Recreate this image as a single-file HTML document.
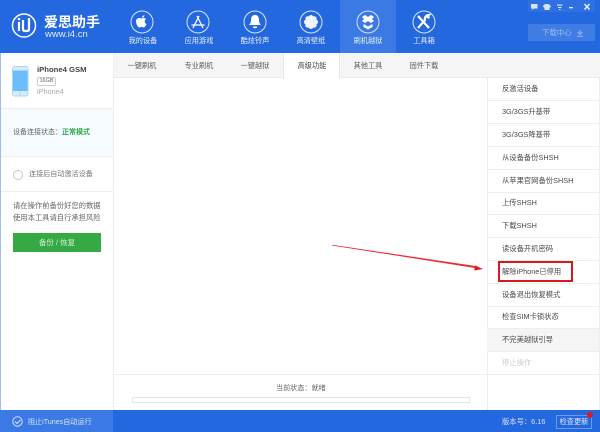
<!DOCTYPE html>
<html lang="zh"><head><meta charset="utf-8"><style>
*{box-sizing:border-box}
html,body{margin:0;padding:0;width:600px;height:432px;overflow:hidden;background:#fff}
body{position:relative;font-family:"Liberation Sans","Noto Sans CJK SC",sans-serif;color:#555;font-size:7px}
#w{position:absolute;left:0;top:0;width:600px;height:432px;filter:blur(.3px)}
.a{position:absolute}
.t{position:absolute;white-space:nowrap;line-height:12px}
.nav{position:absolute;top:35px;width:56px;text-align:center;color:#e6effc;font-size:7.200px;line-height:12px;white-space:nowrap}
.tab{position:absolute;top:60px;width:56px;text-align:center;color:#5a5a5a;font-size:7.200px;line-height:12px;white-space:nowrap}
.r{position:absolute;left:487px;width:112px;height:23px;border-bottom:1px solid #eee;padding-left:15px;line-height:22px;font-size:7.300px;color:#4a4a4a;white-space:nowrap}
svg{position:absolute;overflow:visible}
</style></head><body><div id="w">
<div class="a" style="left:0;top:0;width:600px;height:53px;background:#2468e0"></div>
<div class="a" style="left:340px;top:0;width:56px;height:53px;background:#3b79e5"></div>
<div class="a" style="left:528px;top:0;width:67px;height:12px;background:#2f70e2"></div>
<div class="a" style="left:528px;top:24px;width:67px;height:17px;background:#3f7de5"></div>

<svg style="left:0;top:0" width="600" height="53" viewBox="0 0 600 53">
<circle cx="24" cy="25.500" r="11.500" fill="none" stroke="#fff" stroke-width="1.500"/>
<path d="M19 22v9M23 20v9q0 2 2 2h2q2 0 2-2v-11" fill="none" stroke="#fff" stroke-width="2.200"/>
<circle cx="19" cy="19" r="1.300" fill="#fff"/>
<g fill="none" stroke="#d8e6fb" stroke-width="1">
<circle cx="142" cy="22" r="11"/><circle cx="198" cy="22" r="11"/><circle cx="255" cy="22" r="11"/><circle cx="311" cy="22" r="11"/><circle cx="368" cy="22" r="11"/><circle cx="424" cy="22" r="11"/>
</g>
<path d="M142 18.500c1.500-.8 3-.8 4 .5-2 1.500-1.500 4 .5 5-.8 2-2 3.500-3 3.500s-1.300-.6-2-.6-1.200.6-2 .6c-1.500 0-3.500-3.500-3.500-6 0-3 2.800-4.300 6-3zM142 18c0-1.500 1-2.500 2.500-3 0 1.500-1 2.700-2.500 3z" fill="#fff"/>
<path d="M193 28l6-12M203 28l-6-12M191.500 25h13" stroke="#fff" stroke-width="1.300" fill="none"/>
<path d="M255 15c-3 0-4 2.500-4 5 0 2.500-1 4-2 5h12c-1-1-2-2.500-2-5 0-2.500-1-5-4-5z" fill="#fff"/><path d="M253 26.500h4v1q-2 1.500-4 0z" fill="#fff"/>
<g fill="#f0f5fd"><circle cx="311" cy="22" r="3"/><circle cx="311" cy="17.500" r="2.500"/><circle cx="311" cy="26.500" r="2.500"/><circle cx="306.500" cy="22" r="2.500"/><circle cx="315.500" cy="22" r="2.500"/><circle cx="307.800" cy="18.800" r="2.500"/><circle cx="314.200" cy="18.800" r="2.500"/><circle cx="307.800" cy="25.200" r="2.500"/><circle cx="314.200" cy="25.200" r="2.500"/></g>
<path d="M362 17l3-2 3 2 3-2 3 2-2 2 2 2-3 2-3-2-3 2-3-2 2-2zM363.500 24l4.500 2.500 4.500-2.500v3l-4.500 2.500-4.500-2.500z" fill="#fff"/>
<path d="M418 16l11 12M429.500 18l-2-1 1.500-2a4 4 0 0 0-4 5l-7 8" stroke="#fff" stroke-width="2.200" fill="none"/>
<path d="M531 4h6.500v4.500h-3.500l-1.500 1.500V8.500H531z" fill="#d8e6fb"/>
<path d="M543.500 5l2-1h2.500l2 1 1 2-1.500 .8V10h-5V7.800L543 7z" fill="#d8e6fb"/>
<path d="M557 4.500h5.500v1.300h-5.500zM558 7h3.500v1h-3.500zM559 9h1.500v1h-1.500z" fill="#d8e6fb"/>
<path d="M569 7h4v1.300h-4z" fill="#d8e6fb"/>
<path d="M584.500 4l5 5.500M589.500 4l-5 5.500" stroke="#e8f0fc" stroke-width="1.500"/>
<path d="M580 30v4M577.500 32l2.500 2.500 2.500-2.500M577 36.300h6" stroke="#8fb5ef" stroke-width="1" fill="none"/>
</svg>
<div class="t" style="left:44px;top:14px;font-size:14px;line-height:16px;color:#fff;font-weight:bold">爱思助手</div>
<div class="t" style="left:45px;top:29px;font-size:9.500px;color:#e3edfc">www.i4.cn</div>
<div class="nav" style="left:115px">我的设备</div>
<div class="nav" style="left:171px">应用游戏</div>
<div class="nav" style="left:227px">酷炫铃声</div>
<div class="nav" style="left:283px">高清壁纸</div>
<div class="nav" style="left:340px">刷机越狱</div>
<div class="nav" style="left:396px">工具箱</div>
<div class="t" style="left:542px;top:27px;font-size:7.400px;color:#9dbdf0">下载中心</div>

<div class="a" style="left:114px;top:53px;width:486px;height:25px;background:#f5f5f5;border-bottom:1px solid #ebebeb"></div>
<div class="a" style="left:283px;top:53px;width:57px;height:26px;background:#fff;border-left:1px solid #e8e8e8;border-right:1px solid #e8e8e8"></div>
<div class="tab" style="left:114px">一键刷机</div>
<div class="tab" style="left:171px">专业刷机</div>
<div class="tab" style="left:227px">一键越狱</div>
<div class="tab" style="left:284px;color:#444">高级功能</div>
<div class="tab" style="left:340px">其他工具</div>
<div class="tab" style="left:396px">固件下载</div>

<div class="a" style="left:0;top:53px;width:1px;height:357px;background:#9dbdf0"></div>
<div class="a" style="left:113px;top:53px;width:1px;height:357px;background:#eee"></div>
<div class="a" style="left:1px;top:108px;width:112px;height:49px;background:#f5fbff;border-top:1px solid #eee;border-bottom:1px solid #eee"></div>
<div class="a" style="left:1px;top:191px;width:112px;height:1px;background:#eee"></div>

<svg style="left:12px;top:66px" width="18" height="31" viewBox="0 0 18 31">
<rect x=".5" y=".5" width="15.500" height="29.500" rx="2" fill="#6cbdfb" stroke="#a9d4f2"/>
<rect x="1" y="1" width="14.500" height="3.500" fill="#d6ecfb"/><rect x="1" y="25" width="14.500" height="4.500" fill="#d6ecfb"/>
<path d="M8.200 25v5" stroke="#a9d4f2"/>
</svg>
<div class="t" style="left:37px;top:64px;font-size:7.700px;font-weight:bold;color:#444">iPhone4 GSM</div>
<div class="t" style="left:37px;top:77px;width:19px;height:9px;border:1px solid #ccc;border-radius:2px;font-size:5.500px;line-height:7px;text-align:center;color:#666">16GB</div>
<div class="t" style="left:37px;top:86px;font-size:7.300px;color:#aaa">iPhone4</div>
<div class="t" style="left:13px;top:127px;font-size:7px;color:#666">设备连接状态：<span style="color:#2fa84a;font-weight:bold">正常模式</span></div>
<div class="a" style="left:13px;top:170px;width:10px;height:10px;border:1px solid #c8c8c8;border-radius:50%;background:#fff"></div>
<div class="t" style="left:29px;top:168px;font-size:7.100px;color:#777">连接后自动激活设备</div>
<div class="t" style="left:13px;top:200px;font-size:7.300px;color:#666">请在操作前备份好您的数据</div>
<div class="t" style="left:13px;top:212px;font-size:7.300px;color:#666">使用本工具请自行承担风险</div>
<div class="a" style="left:13px;top:233px;width:88px;height:19px;background:#35a944;color:#d5f0d9;text-align:center;font-size:7.500px;line-height:19px">备份 / 恢复</div>

<div class="a" style="left:487px;top:78px;width:1px;height:332px;background:#eee"></div>
<div class="a" style="left:599px;top:78px;width:1px;height:332px;background:#eee"></div>
<div class="r" style="top:78px">反激活设备</div>
<div class="r" style="top:101px">3G/3GS升基带</div>
<div class="r" style="top:124px">3G/3GS降基带</div>
<div class="r" style="top:147px">从设备备份SHSH</div>
<div class="r" style="top:170px">从苹果官网备份SHSH</div>
<div class="r" style="top:192px">上传SHSH</div>
<div class="r" style="top:215px">下载SHSH</div>
<div class="r" style="top:238px">读设备开机密码</div>
<div class="r" style="top:261px">解除iPhone已停用</div>
<div class="r" style="top:284px">设备退出恢复模式</div>
<div class="r" style="top:306px">检查SIM卡锁状态</div>
<div class="r" style="top:329px;background:#f5f5f5">不完美越狱引导</div>
<div class="r" style="top:352px;color:#ccc">停止操作</div>
<div class="a" style="left:498px;top:261px;width:75px;height:21px;border:2px solid #d81820"></div>
<svg style="left:0;top:0" width="600" height="432" viewBox="0 0 600 432">
<path d="M332 244.800L477 266.300 476.700 268.200 332 245.500z" fill="#ee2a30"/>
<path d="M483 269l-8-3.500-.8 5z" fill="#e8141c"/>
</svg>

<div class="a" style="left:114px;top:374px;width:373px;height:1px;background:#eee"></div>
<div class="t" style="left:276px;top:382px;font-size:7.100px;color:#666">当前状态：就绪</div>
<div class="a" style="left:132px;top:397px;width:338px;height:6px;border:1px solid #e4e4e4;background:#fff"></div>

<div class="a" style="left:0;top:410px;width:600px;height:22px;background:#2468e0"></div>
<div class="a" style="left:0;top:410px;width:113px;height:22px;background:#3b79e5"></div>
<svg style="left:12px;top:416px" width="12" height="12" viewBox="0 0 12 12"><circle cx="5.500" cy="5.500" r="4.700" fill="none" stroke="#d8e6fb"/><path d="M3 5.500l2 2 3.500-3.500" fill="none" stroke="#d8e6fb"/></svg>
<div class="t" style="left:28px;top:416px;font-size:7.100px;color:#d8e6fb">阻止iTunes自动运行</div>
<div class="t" style="left:502px;top:416px;font-size:7.300px;color:#d8e6fb">版本号：6.16</div>
<div class="a" style="left:556px;top:415px;width:36px;height:14px;border:1px solid #6b9bec;color:#e5eefc;font-size:7.200px;line-height:12px;text-align:center;white-space:nowrap">检查更新</div>
<div class="a" style="left:587px;top:412px;width:6px;height:6px;border-radius:50%;background:#e8141c"></div>
</div></body></html>
